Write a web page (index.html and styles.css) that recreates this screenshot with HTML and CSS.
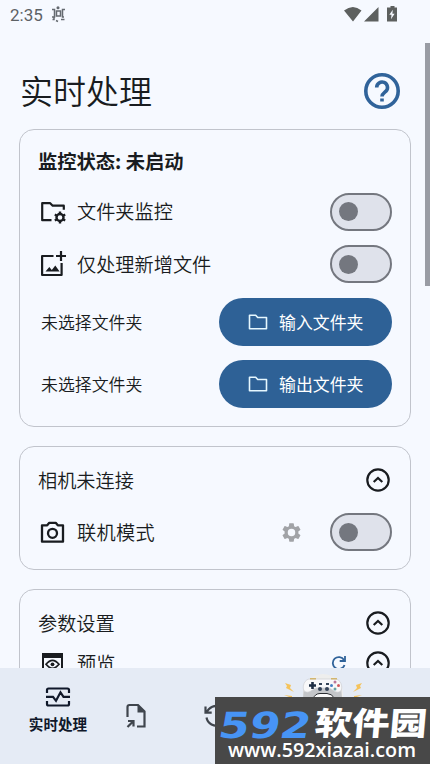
FILE: index.html
```html
<!DOCTYPE html>
<html lang="zh-CN">
<head>
<meta charset="utf-8">
<title>实时处理</title>
<link rel="stylesheet" href="styles.css">
</head>
<body>
<svg class="defs" width="0" height="0">
  <defs>
    <path id="gear" d="M19.14 12.94c.04-.3.06-.61.06-.94 0-.32-.02-.64-.07-.94l2.03-1.58a.49.49 0 0 0 .12-.61l-1.92-3.32a.488.488 0 0 0-.59-.22l-2.39.96c-.5-.38-1.03-.7-1.62-.94l-.36-2.54a.484.484 0 0 0-.48-.41h-3.84c-.24 0-.43.17-.47.41l-.36 2.54c-.59.24-1.13.57-1.62.94l-2.39-.96c-.22-.08-.47 0-.59.22L2.74 8.87c-.12.21-.08.47.12.61l2.03 1.58c-.05.3-.09.63-.09.94s.02.64.07.94l-2.03 1.58a.49.49 0 0 0-.12.61l1.92 3.32c.12.22.37.29.59.22l2.39-.96c.5.38 1.03.7 1.62.94l.36 2.54c.05.24.24.41.48.41h3.84c.24 0 .44-.17.47-.41l.36-2.54c.59-.24 1.13-.56 1.62-.94l2.39.96c.22.08.47 0 .59-.22l1.92-3.32c.12-.22.07-.47-.12-.61l-2.01-1.58zM12 15.900a3.900 3.900 0 1 1 0-7.800 3.900 3.900 0 0 1 0 7.800z"/>
    <g id="collapse" fill="none" stroke="currentColor" stroke-width="2.200"><circle cx="12" cy="12" r="10.700"/><path d="M7.700 14l4.300-4 4.300 4"/></g>
    <path id="folder" fill="none" stroke="currentColor" stroke-width="1.600" stroke-linejoin="round" d="M1.500 1.300h6.200l2 2.200h8.800v11.300h-17z"/>
    <path id="bolt" fill="#f5c35b" d="M0 0l6 2-1 3 4 4-8-4 1-2z"/>
  </defs>
</svg>

<div class="screen">
  <header class="status">
    <span class="time">2:35</span>
    <svg width="15" height="17" viewBox="0 0 15 17" fill="none" stroke="#656a70" stroke-width="1.500"><path d="M1 3.500h2.500v7.500H1M14 3.500h-2.500v7.500h1.500M5.500 5h4v5h-4zM1.500 13.500h1.500v-2M13.500 13.500h-3.500M5 14.500l2 1"/><circle cx="7" cy="1.800" r=".8"/></svg>
    <svg class="signals" width="54" height="18" viewBox="0 0 54 18" fill="#5d605f"><path d="M0 4.500Q9-2.500 17.500 4.500L9 15.500zM34.500 1v14.500H20zM46.500 0h4v1.500H53v14H43v-14h3.500z"/><path fill="#f6f9ff" d="M48.800 3.800l-3.500 5h2.200l-.5 4.500 3.600-5.600h-2.200z"/></svg>
  </header>

  <main class="content">
    <div class="titlebar">
      <h1>实时处理</h1>
      <svg width="36" height="36" viewBox="0 0 36 36" fill="none" stroke="#30639a" stroke-width="3.600"><circle cx="18" cy="18" r="16.200"/><path d="M12.700 14.500a5.400 5.400 0 1 1 9.300 3.700c-2.200 2-4 2.700-4 5.300M18 25.500v3"/></svg>
    </div>

    <section class="card monitor">
      <h2 class="row strong">监控状态: 未启动</h2>
      <div class="row r51">
        <svg class="icon" viewBox="0 0 29 29"><path fill="none" stroke="currentColor" stroke-width="2.200" stroke-linejoin="round" d="M13.500 23.200H4.200V6.200h8l2.500 2.500h11.100v4"/><g transform="translate(22 20.500)"><circle r="3.500" fill="none" stroke="currentColor" stroke-width="2.400"/><path stroke="currentColor" stroke-width="2.400" d="M0-3.500v-2.400M0 3.500v2.400M3-1.800l2.200-1.200M3 1.800l2.200 1.200M-3-1.800l-2.200-1.200M-3 1.800l-2.200 1.200"/></g></svg>
        <span>文件夹监控</span><i class="switch"></i>
      </div>
      <div class="row r53">
        <svg class="icon" viewBox="0 0 29 29"><path fill="none" stroke="currentColor" stroke-width="2.200" stroke-linejoin="round" d="M15.500 6H4.100v19h19.500V13"/><path fill="none" stroke="currentColor" stroke-width="2.200" d="M23 1v10M18 6h10"/><path fill="currentColor" d="M7.500 21.500l3.800-4.500 2.500 3 3.500-4.500 4.300 6z"/></svg>
        <span>仅处理新增文件</span><i class="switch"></i>
      </div>
      <div class="row picker"><span>未选择文件夹</span><button><svg width="20" height="16" viewBox="0 0 20 16"><use href="#folder"/></svg>输入文件夹</button></div>
      <div class="row picker"><span>未选择文件夹</span><button><svg width="20" height="16" viewBox="0 0 20 16"><use href="#folder"/></svg>输出文件夹</button></div>
    </section>

    <section class="card camera">
      <div class="row"><span>相机未连接</span><svg class="toggle" viewBox="0 0 24 24"><use href="#collapse"/></svg></div>
      <div class="row">
        <svg class="icon" viewBox="0 0 29 29" fill="none" stroke="currentColor" stroke-width="2.300" stroke-linejoin="round"><path d="M4 7.300h5.200L11.300 4.800h6.400l2.100 2.500H25v16.400H4z"/><circle cx="14.500" cy="15.300" r="4.500"/></svg>
        <span class="wide">联机模式</span>
        <svg class="gear" viewBox="0 0 24 24" fill="#a1a3a7"><use href="#gear"/></svg><i class="switch"></i>
      </div>
    </section>

    <section class="card params">
      <div class="row"><span>参数设置</span><svg class="toggle" viewBox="0 0 24 24"><use href="#collapse"/></svg></div>
      <div class="row preview">
        <svg class="icon" viewBox="0 0 29 29"><path fill="currentColor" d="M4 4h21v5H4z"/><path fill="none" stroke="currentColor" stroke-width="2" d="M5 7v18h19V7"/><path fill="none" stroke="currentColor" stroke-width="1.700" d="M8 15.300q6.500-8 13 0-6.500 8-13 0z"/><circle cx="14.500" cy="15.300" r="1.900" fill="currentColor"/></svg>
        <span>预览</span>
        <svg class="refresh" viewBox="0 0 16 16" fill="none" stroke="#30639a" stroke-width="1.800"><path d="M13.500 10A6 6 0 1 1 13 5"/><path d="M14 1v5H8.700"/></svg>
        <svg class="toggle" viewBox="0 0 24 24"><use href="#collapse"/></svg>
      </div>
    </section>
  </main>

  <nav class="tabs">
    <a class="tab active"><svg width="26" height="20" viewBox="0 0 26 20" fill="none" stroke="currentColor" stroke-width="2.200"><path d="M2 6V3q0-1.500 1.500-1.500h19Q24 1.500 24 3v3M2 14v3q0 1.500 1.500 1.500h19Q24 18.500 24 17v-3M1 9.800h7l3 4 4.500-8.500 3 4.500H25"/></svg><span>实时处理</span></a>
    <a class="tab"><svg width="22" height="26" viewBox="0 0 22 26" fill="none" stroke="currentColor" stroke-width="2.200"><path d="M2.500 14V4q0-2 2-2h8.500l6.500 6.500v15H12"/><path fill="currentColor" stroke="none" d="M12.500 2v7.500h7z"/><path d="M2.500 24L8.500 18M3 18h5.500v5.500"/></svg></a>
    <a class="tab history"><svg width="26" height="24" viewBox="0 0 26 24" fill="none" stroke="currentColor" stroke-width="2.200"><path d="M2.500 13.500A10 10 0 1 0 5 5L2 8.500M1.500 2.500v6.200h6.200M12.500 6v7l4.500 3"/></svg></a>
    <a class="tab"></a>
  </nav>

  <i class="scrollbar"></i>

  <svg class="mascot" width="86" height="24" viewBox="0 0 86 24">
    <ellipse cx="43" cy="20" rx="20" ry="20" fill="#eeeeed"/>
    <path fill="#c4c6c9" d="M24 12h37l1 12H23z"/>
    <path fill="#f8f8f9" stroke="#cdcfd3" stroke-width=".7" d="M30 5h25c7 0 9 12 4 13-5 1-7-4-11-4H37c-4 0-6 5-11 4-5-1-3-13 4-13z"/>
    <path stroke="#1d2d43" stroke-width="2.600" d="M29 11.500h7M32.500 8v7"/>
    <g fill="#344357"><circle cx="40" cy="15" r="2"/><circle cx="47" cy="15" r="2"/><path d="M39 9h3v2h-3zM46 9h3v2h-3z"/></g>
    <circle cx="55" cy="8" r="1.500" fill="#b9789b"/><circle cx="58.500" cy="11.500" r="1.500" fill="#cf5b5e"/><circle cx="51.500" cy="11.500" r="1.500" fill="#437fc5"/><circle cx="55" cy="15" r="1.500" fill="#68a4a4"/>
    <path fill="#fafafa" stroke="#2b2d31" d="M33 25q2-5.500 7-5.500h7q5 0 8 5.500"/>
    <path fill="#d2b66f" d="M30 4h6v1.500h-6zM51 4h6v1.500h-6z"/>
    <use href="#bolt" x="5" y="9"/><use href="#bolt" transform="translate(82 9) scale(-1 1)"/>
    <path fill="#f5c35b" d="M4 21l8 1v2zM82 21l-8 1v2z"/>
  </svg>
  <div class="watermark">
    <svg width="215" height="67" viewBox="0 0 215 67">
      <text class="digits" transform="translate(2 41) skewX(-10)" textLength="92" lengthAdjust="spacingAndGlyphs">592</text>
      <text class="brand" transform="translate(99 38) skewX(-5)" textLength="112" lengthAdjust="spacingAndGlyphs">软件园</text>
      <text class="site" x="13" y="60" textLength="188" lengthAdjust="spacingAndGlyphs">www.592xiazai.com</text>
    </svg>
  </div>
</div>
</body>
</html>
```
FILE: styles.css
```css
* { box-sizing: border-box; }
body { margin: 0; background: #f6f9ff; color: #191c20; font-family: "Noto Sans CJK SC", sans-serif; }
svg { flex: none; display: block; }
.defs { position: absolute; }
.screen { position: relative; width: 430px; height: 764px; overflow: hidden; display: flex; flex-direction: column; }
.status { height: 43px; flex: none; display: flex; align-items: flex-start; padding: 6px 32px 0 10px; }
.time { font: 17px/18px Roboto, sans-serif; color: #5d6165; width: 41px; }
.signals { margin-left: auto; }
.content { flex: 1; min-height: 0; overflow: hidden; padding: 0 19px; }
.titlebar { height: 86px; padding: 0 11px 0 1px; display: flex; align-items: center; justify-content: space-between; }
.titlebar svg { margin-top: 10px; }
h1 { margin: 7px 0 0; font-size: 33px; line-height: 48px; font-weight: 350; }
.card { border: 1px solid #c1c4cc; border-radius: 15px; padding: 7px 18px 0 18px; margin-bottom: 19px; width: 392px; }
.monitor { height: 298px; }
.camera { height: 124px; }
.params { height: 180px; margin: 0; }
.row { height: 52px; margin: 0; display: flex; align-items: center; font-size: 19.200px; font-weight: 350; line-height: 28px; white-space: nowrap; }
.row span { padding-bottom: 1px; }
.wide { letter-spacing: .3px; }
.strong { height: 49px; font-size: 19.300px; font-weight: 700; padding-bottom: 1px; }
.r51 { height: 51px; }
.r53 { height: 54px; }
.icon { width: 29px; height: 29px; margin: 0 10px 0 0; }
.switch { width: 62px; height: 38px; margin-left: auto; border: 2px solid #74777f; border-radius: 19px; background: #dfe2eb; display: flex; align-items: center; padding-left: 7px; flex: none; }
.switch::before { content: ""; width: 19px; height: 19px; border-radius: 50%; background: #74777f; }
.picker { height: 62px; font-size: 16.900px; padding-left: 3px; }
button { width: 173px; height: 48px; margin-left: auto; padding: 0 0 1px 29px; border: 0; border-radius: 24px; background: #2e6196; color: #fff; display: flex; align-items: center; gap: 11px; font: 400 16.900px/24px "Noto Sans CJK SC", sans-serif; }
button svg { color: #e6f8ff; }
.toggle { width: 24px; height: 24px; margin: 0 2.500px 1px auto; }
.gear { width: 23px; height: 23px; margin: 0 27px 0 auto; }
.gear + .switch { margin-left: 0; }
.preview { height: 28px; }
.refresh { width: 16px; height: 16px; margin: 0 19px 0 auto; }
.refresh + .toggle { margin-left: 0; }
.tabs { height: 96px; flex: none; background: #e5ebf5; display: grid; grid-template-columns: 58px 60px 60px 1fr; column-gap: 19px; padding-left: 29px; }
.tab { height: 95px; display: flex; flex-direction: column; align-items: center; justify-content: center; color: #3f454d; }
.history { padding-left: 3px; }
.active { justify-content: flex-start; padding-top: 19px; color: #10182a; font-size: 14.600px; line-height: 20px; font-weight: 700; white-space: nowrap; }
.active span { margin-top: 7px; }
.scrollbar { position: absolute; right: 0; top: 43px; width: 5px; height: 243px; background: #999ca4; }
.mascot { position: absolute; left: 280px; top: 674px; }
.watermark { position: absolute; right: 0; bottom: 0; width: 215px; height: 67px; background: #484848; }
.digits { font: 700 36px "DejaVu Sans", sans-serif; fill: #4794f5; }
.brand { font: 900 32px "Noto Sans CJK SC", sans-serif; fill: #fff; }
.site { font: 600 20px "Open Sans", sans-serif; fill: #fff; }
```
